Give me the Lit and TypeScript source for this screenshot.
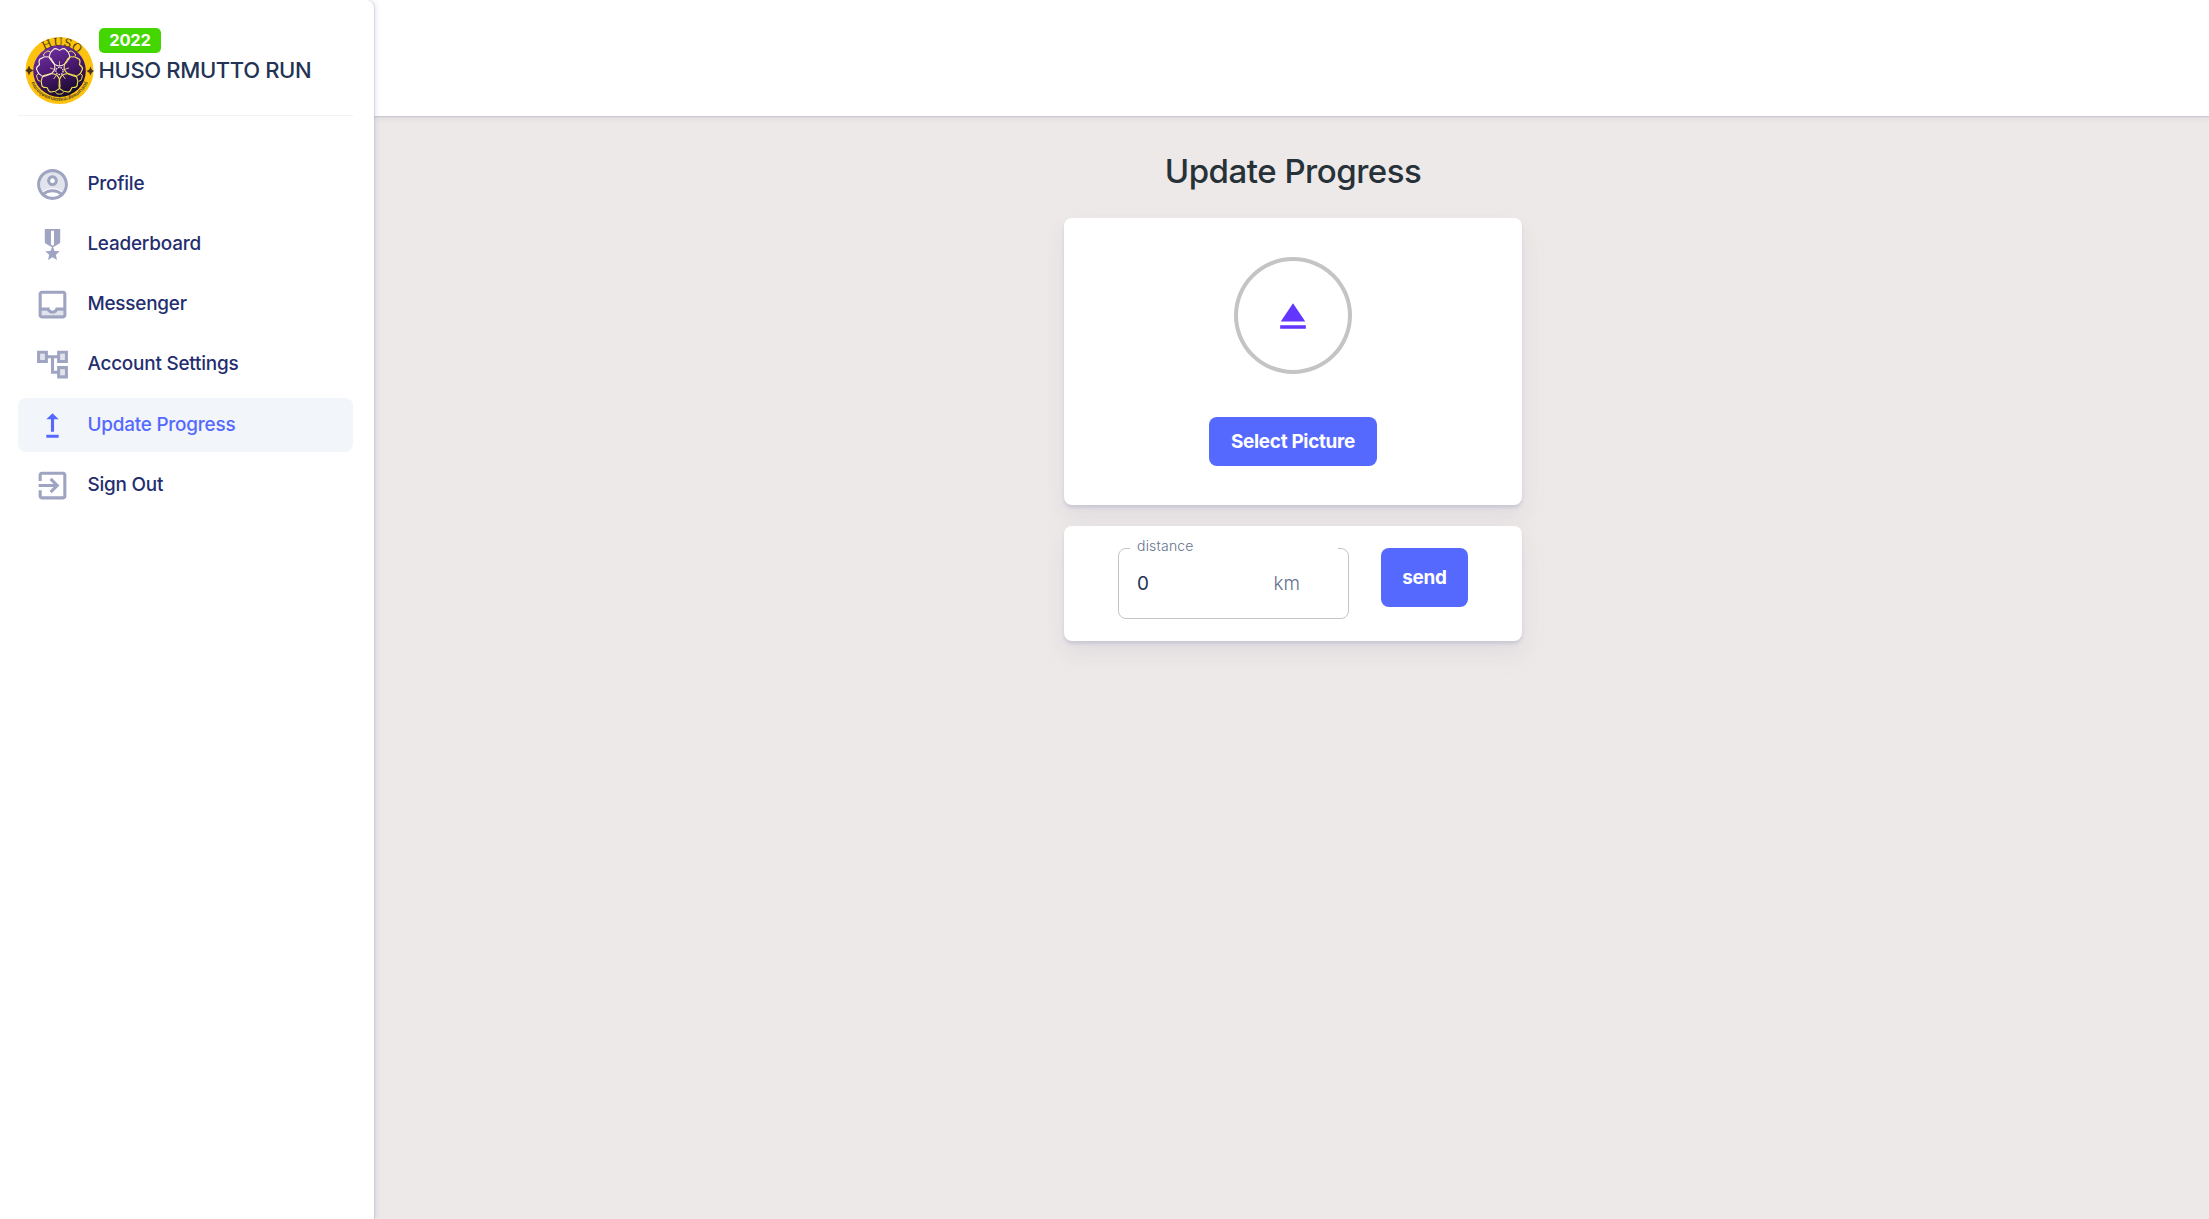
import { LitElement, html, svg, css } from "lit";
import { customElement, property } from "lit/decorators.js";

const icons: Record<string, unknown> = {
  profile: svg`<path opacity=".3" d="M12 4c-4.41 0-8 3.59-8 8 0 1.82.62 3.49 1.64 4.83 1.43-1.74 4.9-2.33 6.36-2.33s4.93.59 6.36 2.33C19.38 15.49 20 13.82 20 12c0-4.41-3.59-8-8-8zm0 9c-1.94 0-3.5-1.56-3.5-3.5S10.06 6 12 6s3.5 1.56 3.5 3.5S13.94 13 12 13z"/><path d="M12 2C6.48 2 2 6.48 2 12s4.48 10 10 10 10-4.48 10-10S17.52 2 12 2zM7.35 18.5C8.66 17.56 10.26 17 12 17s3.34.56 4.65 1.5c-1.31.94-2.91 1.5-4.65 1.5s-3.34-.56-4.65-1.5zm10.79-1.38C16.45 15.8 14.32 15 12 15s-4.45.8-6.14 2.12C4.7 15.73 4 13.95 4 12c0-4.42 3.58-8 8-8s8 3.58 8 8c0 1.95-.7 3.73-1.86 5.12z"/><path d="M12 6c-1.93 0-3.5 1.57-3.5 3.5S10.07 13 12 13s3.5-1.57 3.5-3.5S13.93 6 12 6zm0 5c-.83 0-1.5-.67-1.5-1.5S11.17 8 12 8s1.5.67 1.5 1.5S12.83 11 12 11z"/>`,
  medal: svg`<path d="M17 10.43V2H7v8.43c0 .35.18.68.49.86l4.18 2.51-.99 2.34-3.41.29 2.59 2.24L9.07 22 12 20.23 14.93 22l-.78-3.33 2.59-2.24-3.41-.29-.99-2.34 4.18-2.51c.3-.18.48-.5.48-.86zm-4 1.8-1 .6-1-.6V3h2v9.23z"/>`,
  inbox: svg`<path opacity=".3" d="M12.01 18c-1.48 0-2.75-.81-3.45-2H5v3h14v-3h-3.55c-.69 1.19-1.97 2-3.44 2z"/><path d="M19 3H5c-1.1 0-2 .9-2 2v14c0 1.1.89 2 2 2h14c1.1 0 2-.9 2-2V5c0-1.1-.9-2-2-2zm0 16H5v-3h3.56c.69 1.19 1.97 2 3.45 2s2.75-.81 3.45-2H19v3zm0-5h-4.99c0 1.1-.9 2-2 2s-2-.9-2-2H5V5h14v9z"/>`,
  tree: svg`<path opacity=".3" d="M7 9H4V5h3v4zm10 6h3v4h-3v-4zm0-10h3v4h-3V5z"/><path d="M22 11V3h-7v3H9V3H2v8h7V8h2v10h4v3h7v-8h-7v3h-2V8h2v3h7zM7 9H4V5h3v4zm10 6h3v4h-3v-4zm0-10h3v4h-3V5z"/>`,
  upgrade: svg`<path d="M16 18v2H8v-2h8zM11 7.99V16h2V7.99h3L12 4 8 7.99h3z"/>`,
  exit: svg`<path d="M10.09 15.59 11.5 17l5-5-5-5-1.41 1.41L12.67 11H3v2h9.67l-2.58 2.59zM19 3H5c-1.11 0-2 .9-2 2v4h2V5h14v14H5v-4H3v4c0 1.1.89 2 2 2h14c1.1 0 2-.9 2-2V5c0-1.1-.9-2-2-2z"/>`,
  eject: svg`<path d="M5 17h14v2H5zm7-12L5.33 15h13.34z"/>`,
};

@customElement("ui-icon")
class UiIcon extends LitElement {
  static styles = css`
    :host { display: block; width: 37px; height: 37px; flex: none; }
    svg { display: block; width: 100%; height: 100%; fill: currentColor; }
  `;
  @property() name = "";
  render() {
    return html`<svg viewBox="0 0 24 24">${icons[this.name]}</svg>`;
  }
}

@customElement("club-seal")
class ClubSeal extends LitElement {
  static styles = css`
    :host { display: block; width: 69px; height: 67px; flex: none; }
    svg { display: block; width: 100%; height: 100%; overflow: visible; }
    .name { font: 400 11.5px "DejaVu Serif", serif; fill: #4a3a10; }
    .motto { font: 700 5px "Noto Sans", "Noto Sans Thai", sans-serif; fill: #5b4a20; }
  `;
  render() {
    const petal = "M0 -5C-3 -5.500 -6 -7 -8 -10.500C-10 -12 -11 -15 -9.500 -17C-9.500 -20 -7 -20 -6 -22C-4 -24 -2 -22 0 -21C2 -22 4 -24 6 -22C7 -20 9.500 -20 9.500 -17C11 -15 10 -12 8 -10.500C6 -7 3 -5.500 0 -5Z";
    const angles = [0, 72, 144, 216, 288];
    return html`<svg viewBox="0 0 69 68" preserveAspectRatio="none">
      <defs>
        <linearGradient id="core" x1=".25" y1="0" x2=".7" y2="1">
          <stop offset="0" stop-color="#7432a8" />
          <stop offset=".5" stop-color="#48176e" />
          <stop offset="1" stop-color="#100a20" />
        </linearGradient>
        <path id="top" d="M9 34A25.500 25 0 0 1 60 34" />
        <path id="bottom" d="M3.7 34A30.8 30.8 0 0 0 65.3 34" />
      </defs>
      <circle cx="34.5" cy="34" r="34" fill="#fdc20f" />
      <circle cx="34.5" cy="34.500" r="26.3" fill="url(#core)" />
      <g transform="translate(34.5 34.5)" fill="none" stroke="#f8eca0" stroke-width="1.1">
        ${angles.map((a) => svg`<g transform="rotate(${a})">
          <path d=${petal} stroke=${a === 0 || a === 288 ? "#fbf0d8" : "#f3e850"} />
          <path d="M0 -5V-10" stroke-width=".7" />
        </g>`)}
        ${angles.map((a) => svg`<path transform="rotate(${a + 36})" d="M-4 -21.500Q-3 -24 0 -23.500Q3 -24 4 -21.500" stroke="#f3e850" stroke-width=".9" />`)}
        <circle r="3.600" fill="#3c1060" stroke="#fff1dc" stroke-width="1.2" stroke-dasharray="1.6 .9" />
      </g>
      <g fill="#4a3318">
        <path d="M4 29l1.4 3.2 3 1.8-3 1.8L4 39l-1.4-3.2L.4 34l2.2-1.8z" />
        <path d="M65.5 30l1.2 3 2.2 1.6-2.2 1.6-1.2 3-1.2-3-2.8-1.6 2.8-1.6z" />
      </g>
      <text class="name" text-anchor="middle"><textPath href="#top" startOffset="53%">HUSO</textPath></text>
      <text class="motto" text-anchor="middle"><textPath href="#bottom" startOffset="50%">คณะมนุษยศาสตร์และสังคมศาสตร์</textPath></text>
    </svg>`;
  }
}

const menu = [
  { icon: "profile", label: "Profile" },
  { icon: "medal", label: "Leaderboard" },
  { icon: "inbox", label: "Messenger" },
  { icon: "tree", label: "Account Settings" },
  { icon: "upgrade", label: "Update Progress", active: true },
  { icon: "exit", label: "Sign Out" },
];

@customElement("app-root")
class AppRoot extends LitElement {
  static styles = css`
    :host {
      display: grid;
      grid-template-columns: 374px 1fr;
      height: 1219px;
      background: #ede9e8;
      font-family: Inter, "Liberation Sans", sans-serif;
      color: #223354;
      overflow: hidden;
    }
    * { box-sizing: border-box; }
    .side {
      background: #fff;
      border-radius: 0 8px 0 0;
      box-shadow: 3px 0 4px rgba(159, 162, 191, 0.18), 1px 0 1px rgba(159, 162, 191, 0.32);
      padding: 0 21px 0 18px;
      z-index: 1;
    }
    .brand {
      display: flex;
      height: 116px;
      padding: 28px 0 0 7px;
      border-bottom: 1px solid #f2f2f3;
    }
    .seal { margin-top: 9px; }
    .brandText { margin-left: 5px; }
    .badge {
      width: 62px;
      height: 25px;
      border-radius: 5px;
      background: #44d600;
      color: #fff;
      font-size: 16.5px;
      font-weight: 700;
      line-height: 24px;
      letter-spacing: -0.2px;
      text-align: center;
    }
    .brandName {
      margin: 4px 0 0 -0.5px;
      font-size: 22px;
      font-weight: 500;
      line-height: 26px;
      letter-spacing: -0.36px;
      white-space: nowrap;
    }
    .menu {
      display: flex;
      flex-direction: column;
      gap: 6.3px;
      margin-top: 41px;
    }
    .item {
      display: flex;
      align-items: center;
      height: 54px;
      padding-left: 16px;
      border-radius: 8px;
      color: #242e6f;
      font-size: 18.9px;
      font-weight: 500;
      letter-spacing: -0.2px;
    }
    .item ui-icon { color: #9ea4c1; margin-right: 16.4px; }
    .item span { margin-top: -2px; }
    .active { background: #f2f5f9; color: #5569ff; }
    .active ui-icon { color: #5569ff; }
    .page { display: flex; flex-direction: column; min-width: 0; }
    .header {
      height: 116px;
      flex: none;
      background: #fff;
      margin-left: -10px;
      box-shadow: 0 3px 4px rgba(159, 162, 191, 0.18), 0 1px 1px rgba(159, 162, 191, 0.32);
    }
    .content {
      display: flex;
      flex-direction: column;
      align-items: center;
      padding-left: 3px;
    }
    .title {
      margin: 35px 0 0;
      height: 67px;
      font-size: 33px;
      line-height: 40px;
      font-weight: 500;
      letter-spacing: -0.48px;
      color: #263238;
      white-space: nowrap;
    }
    .card {
      width: 458px;
      background: #fff;
      border-radius: 8px;
      box-shadow: 0 12px 22px rgba(159, 162, 191, 0.18), 0 3px 3px rgba(159, 162, 191, 0.32);
    }
    .upload {
      height: 287px;
      display: flex;
      flex-direction: column;
      align-items: center;
      padding-top: 39px;
    }
    .ring {
      display: grid;
      place-items: center;
      width: 118px;
      height: 117px;
      border: 4px solid #c4c4c4;
      border-radius: 50%;
      color: #6236ff;
    }
    .ring ui-icon { width: 44px; height: 44px; }
    .button {
      border: 0;
      padding: 0;
      border-radius: 8px;
      background: #5569ff;
      color: #fff;
      font: 700 18.9px Inter, "Liberation Sans", sans-serif;
      letter-spacing: -0.3px;
      white-space: nowrap;
    }
    .select { width: 168px; height: 49px; margin-top: 43px; }
    .entry {
      height: 115px;
      margin-top: 21px;
      padding: 22px 54px;
      display: flex;
      justify-content: space-between;
    }
    .field {
      position: relative;
      width: 231px;
      height: 71px;
      border: 1px solid #c4c4c4;
      border-radius: 8px;
      padding: 0 48px 0 18px;
      display: flex;
      justify-content: space-between;
      font-size: 18.9px;
      line-height: 69px;
    }
    .label {
      position: absolute;
      top: -14px;
      left: 11px;
      width: 208px;
      height: 22px;
      padding-left: 7px;
      background: #fff;
      color: #64718a;
      font-size: 14px;
      font-weight: 300;
      letter-spacing: 0.2px;
      line-height: 21px;
    }
    .unit { color: #64718a; font-weight: 300; }
    .send { width: 87px; height: 59px; }
  `;

  render() {
    return html`
      <aside class="side">
        <div class="brand">
          <club-seal class="seal"></club-seal>
          <div class="brandText">
            <div class="badge">2022</div>
            <div class="brandName">HUSO RMUTTO RUN</div>
          </div>
        </div>
        <nav class="menu">
          ${menu.map((m) => html`<div class="item ${m.active ? "active" : ""}">
            <ui-icon .name=${m.icon}></ui-icon><span>${m.label}</span>
          </div>`)}
        </nav>
      </aside>
      <main class="page">
        <header class="header"></header>
        <section class="content">
          <h1 class="title">Update Progress</h1>
          <div class="card upload">
            <div class="ring"><ui-icon name="eject"></ui-icon></div>
            <button class="button select">Select Picture</button>
          </div>
          <div class="card entry">
            <div class="field">
              <span class="label">distance</span>
              <span>0</span>
              <span class="unit">km</span>
            </div>
            <button class="button send">send</button>
          </div>
        </section>
      </main>
    `;
  }
}
